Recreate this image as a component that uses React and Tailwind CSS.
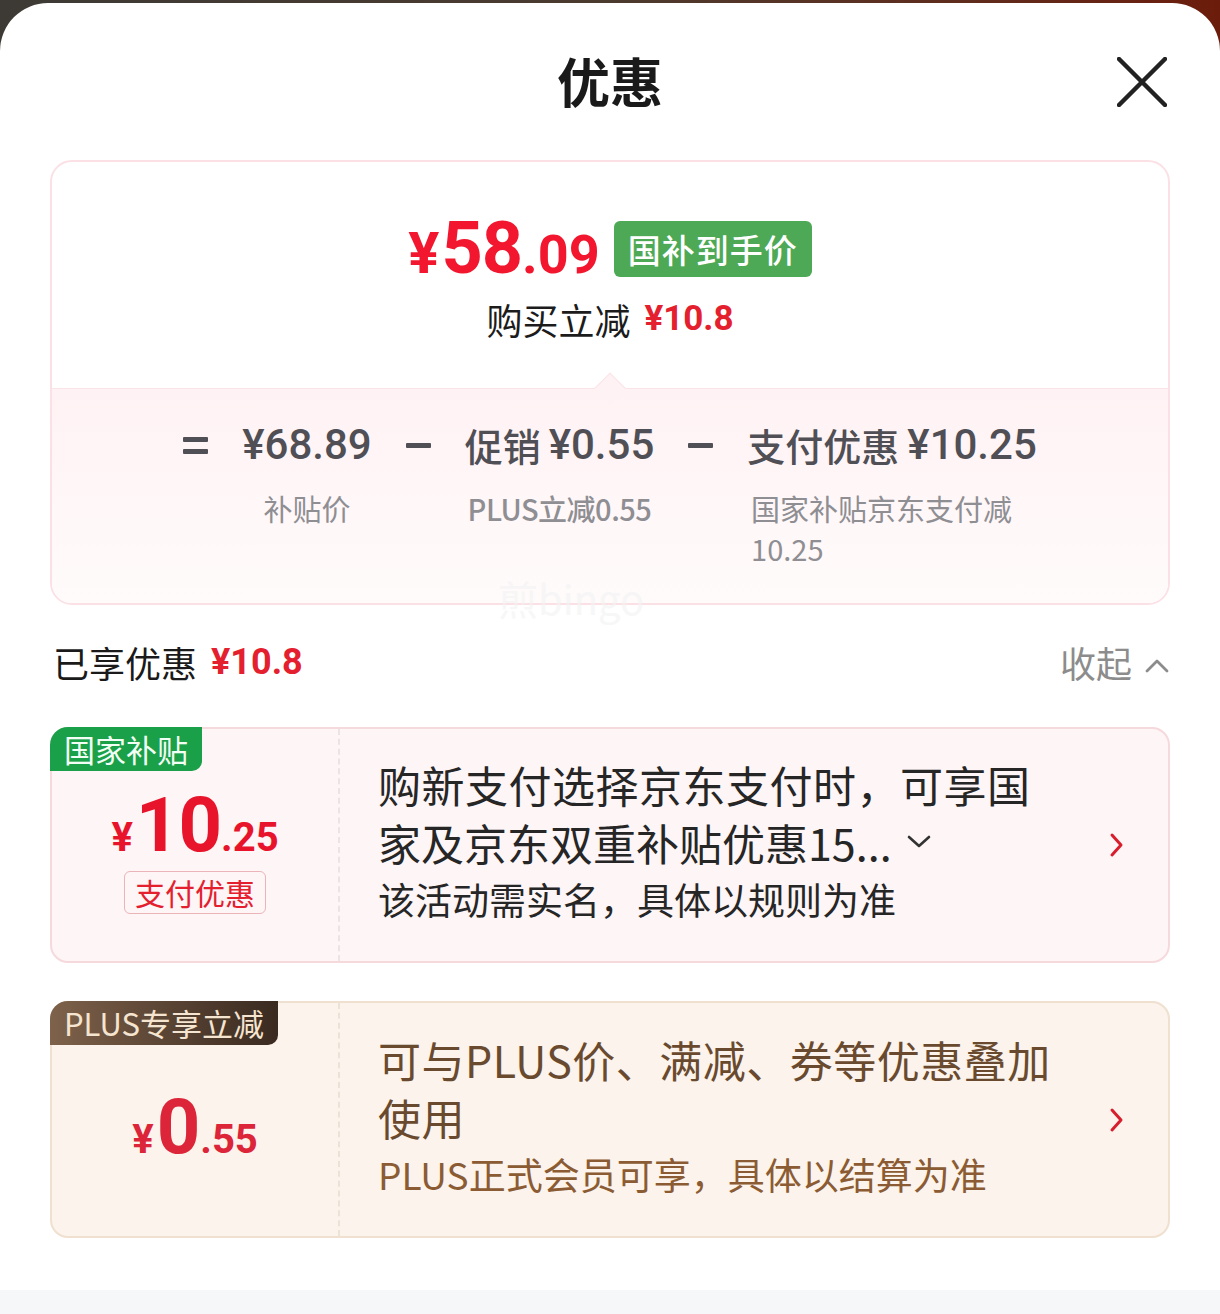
import React from "react";

const CN = { fontFamily: '"Noto Sans CJK SC", "Noto Sans", sans-serif' };
const NUM = { fontFamily: 'Roboto, "Noto Sans CJK SC", sans-serif' };

function ChevronRight() {
  return (
    <svg width="18" height="26" viewBox="0 0 18 26" fill="none">
      <path d="M4 3 L13 13 L4 23" stroke="#d81e2c" strokeWidth="3" strokeLinecap="round" strokeLinejoin="round" />
    </svg>
  );
}

function ChevronDown() {
  return (
    <svg width="26" height="16" viewBox="0 0 26 16" fill="none">
      <path d="M3 3 L13 12 L23 3" stroke="#333" strokeWidth="2.6" strokeLinecap="round" strokeLinejoin="round" />
    </svg>
  );
}

function Bar() {
  return <div className="w-[25px] h-[5px] bg-[#4f4f55] rounded-[1px]" />;
}

export default function App() {
  return (
    <div className="w-[1220px] h-[1314px] overflow-hidden pt-[3px] bg-gradient-to-r from-[#3d3a35] via-[#4b3a2e] to-[#6c1c0b]" style={CN}>
      <div className="relative h-full bg-white rounded-t-[48px] flex flex-col">
        {/* header */}
        <div className="relative h-[157px] flex justify-center pt-[47px]">
          <div className="text-[53px] leading-[60px] font-bold text-[#1a1a1a]">优惠</div>
          <div className="absolute right-[53px] top-[54px] w-[50px] h-[50px]">
            <svg width="50" height="50" viewBox="0 0 50 50" fill="none">
              <path d="M2 2 L48 48 M48 2 L2 48" stroke="#222" strokeWidth="4.5" strokeLinecap="round" />
            </svg>
          </div>
        </div>

        <div className="px-[50px] flex flex-col">
          {/* summary card */}
          <div className="h-[445px] border-2 border-[#fbe1e6] rounded-[22px] overflow-hidden flex flex-col">
            <div className="h-[226px] flex flex-col items-center pt-[58px]">
              <div className="flex items-center gap-[14px] h-[58px]">
                <div className="flex items-baseline text-[#f2172e] font-bold leading-none" style={NUM}>
                  <span className="text-[58px] mr-[2px]">¥</span>
                  <span className="text-[72px] tracking-[-1px]">58</span>
                  <span className="text-[54px]">.09</span>
                </div>
                <div className="h-[56px] px-[14px] rounded-[6px] bg-[#4da955] text-white text-[33px] leading-[56px] font-medium tracking-[1px]">国补到手价</div>
              </div>
              <div className="mt-[19px] flex items-center gap-[14px] h-[44px]">
                <span className="text-[36px] text-[#1c1c1c]">购买立减</span>
                <span className="text-[35px] font-bold text-[#e4202f]" style={NUM}>¥10.8</span>
              </div>
            </div>
            <div className="relative flex-1 bg-gradient-to-b from-[#fff2f4] to-[#fffbfb] border-t border-[#fbe4e8]">
              <div className="absolute left-1/2 -top-[12px] -ml-[11px] w-[22px] h-[22px] rotate-45 bg-[#fff2f4] border-l border-t border-[#fbe4e8]" />
              <div className="relative flex justify-center gap-[34px] pt-[31px]">
                <div className="h-[50px] flex flex-col justify-center gap-[7px]"><Bar /><Bar /></div>
                <div className="flex flex-col items-center">
                  <div className="h-[50px] leading-[50px] text-[42px] font-medium text-[#4f4f55]" style={NUM}>¥68.89</div>
                  <div className="mt-[18px] text-[29px] leading-[40px] text-[#8e8e93]">补贴价</div>
                </div>
                <div className="h-[50px] flex items-center"><Bar /></div>
                <div className="flex flex-col items-center">
                  <div className="h-[50px] leading-[50px] text-[#4f4f55] flex items-center gap-[8px]">
                    <span className="text-[38px] font-medium">促销</span>
                    <span className="text-[42px] font-medium" style={NUM}>¥0.55</span>
                  </div>
                  <div className="mt-[18px] text-[29px] leading-[40px] text-[#8e8e93] font-medium tracking-[-0.5px]">PLUS立减0.55</div>
                </div>
                <div className="h-[50px] flex items-center"><Bar /></div>
                <div className="flex flex-col items-center">
                  <div className="h-[50px] leading-[50px] text-[#4f4f55] flex items-center gap-[8px]">
                    <span className="text-[38px] font-medium">支付优惠</span>
                    <span className="text-[42px] font-medium" style={NUM}>¥10.25</span>
                  </div>
                  <div className="mt-[18px] text-[29px] leading-[40px] text-[#8e8e93] max-w-[282px] text-left">国家补贴京东支付减10.25</div>
                </div>
              </div>
            </div>
          </div>

          {/* watermark */}
          <div className="relative h-0">
            <div className="absolute left-[448px] -top-[32px] text-[40px] leading-[50px] text-[#f3f3f3] opacity-60 pointer-events-none">煎bingo</div>
          </div>

          {/* enjoyed row */}
          <div className="mt-[32px] h-[50px] flex items-center justify-between">
            <div className="flex items-center gap-[14px] pl-[3px]">
              <span className="text-[36px] text-[#1a1a1a]">已享优惠</span>
              <span className="text-[36px] font-bold text-[#e4202f]" style={NUM}>¥10.8</span>
            </div>
            <div className="flex items-center gap-[12px]">
              <span className="text-[36px] text-[#8c8c8c]">收起</span>
              <svg width="26" height="16" viewBox="0 0 26 16" fill="none" className="mt-[8px]">
                <path d="M3 13 L13 3 L23 13" stroke="#8c8c8c" strokeWidth="2.8" strokeLinecap="round" strokeLinejoin="round" />
              </svg>
            </div>
          </div>

          {/* card 1 */}
          <div className="relative mt-[40px] h-[236px] rounded-[18px] border-2 border-[#f6d9dd] bg-[#fdf5f6] flex">
            <div className="absolute -left-[2px] -top-[2px] h-[44px] px-[14px] rounded-tl-[18px] rounded-br-[10px] bg-[#1aa049] text-[#f2fff4] text-[31px] leading-[44px]">国家补贴</div>
            <div className="w-[288px] shrink-0 border-r-2 border-dashed border-[#ece3e4] flex flex-col items-center pt-[58px]">
              <div className="flex items-baseline text-[#e8142b] font-bold leading-none" style={NUM}>
                <span className="text-[40px] mr-[3px]">¥</span>
                <span className="text-[76px] tracking-[-1px]">10</span>
                <span className="text-[40px]">.25</span>
              </div>
              <div className="mt-[8px] h-[43px] px-[10px] border border-[#eab4b9] rounded-[6px] text-[30px] leading-[41px] text-[#e4202f]">支付优惠</div>
            </div>
            <div className="flex-1 flex items-center pl-[38px] pr-[42px] pb-[9px]">
              <div className="flex-1 text-[#262626]">
                <div className="text-[43px] leading-[58px] tracking-[0.5px]">购新支付选择京东支付时，可享国</div>
                <div className="text-[43px] leading-[58px] flex items-center gap-[14px]">
                  <span>家及京东双重补贴优惠15...</span>
                  <ChevronDown />
                </div>
                <div className="text-[37px] leading-[56px]">该活动需实名，具体以规则为准</div>
              </div>
              <div className="pt-[9px]"><ChevronRight /></div>
            </div>
          </div>

          {/* card 2 */}
          <div className="relative mt-[38px] h-[237px] rounded-[18px] border-2 border-[#f0e0cf] bg-[#fbf3ec] flex">
            <div className="absolute -left-[2px] -top-[2px] h-[44px] px-[14px] rounded-tl-[18px] rounded-br-[10px] bg-gradient-to-r from-[#7e624b] to-[#3a2a20] text-[#f5e4cf] text-[31px] leading-[44px]">PLUS专享立减</div>
            <div className="w-[288px] shrink-0 border-r-2 border-dashed border-[#ece3d8] flex flex-col items-center justify-center pt-[14px]">
              <div className="flex items-baseline text-[#dc2538] font-bold leading-none" style={NUM}>
                <span className="text-[40px] mr-[3px]">¥</span>
                <span className="text-[76px]">0</span>
                <span className="text-[40px]">.55</span>
              </div>
            </div>
            <div className="flex-1 flex items-center pl-[38px] pr-[42px] pb-[8px]">
              <div className="flex-1">
                <div className="text-[43px] leading-[58px] text-[#6a4a2f] tracking-[0.5px]">可与PLUS价、满减、券等优惠叠加<br />使用</div>
                <div className="text-[37px] leading-[56px] text-[#8b5b33]">PLUS正式会员可享，具体以结算为准</div>
              </div>
              <div className="pt-[8px]"><ChevronRight /></div>
            </div>
          </div>
        </div>

        <div className="flex-1" />
        <div className="h-[24px] bg-[#f6f7f9]" />
      </div>
    </div>
  );
}
